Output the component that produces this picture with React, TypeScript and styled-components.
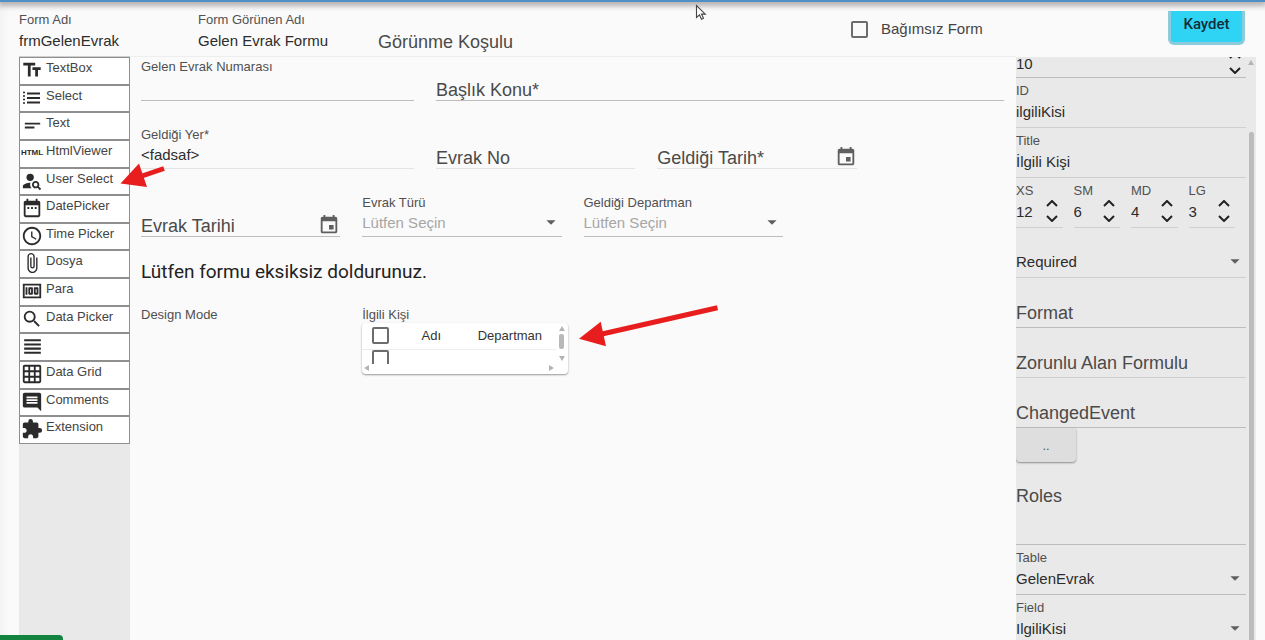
import React from "react";
import styled, { createGlobalStyle, css } from "styled-components";
import {
  MdTextFields,
  MdShortText,
  MdPersonSearch,
  MdDateRange,
  MdAccessTime,
  MdAttachFile,
  MdMoney,
  MdSearch,
  MdViewHeadline,
  MdGridOn,
  MdComment,
  MdExtension,
  MdEvent,
  MdArrowDropDown,
} from "react-icons/md";

const sans = '"Liberation Sans", Arial, sans-serif';
const roboto = 'Roboto, "Liberation Sans", sans-serif';

const GlobalStyle = createGlobalStyle`
  *, *::before, *::after { box-sizing: border-box; }
  body { margin: 0; background: #fafafa; color: #333; font-family: ${sans}; }
  button, input, select { font-family: inherit; color: inherit; margin: 0; }
`;

const Page = styled.div`
  position: relative;
  display: flex;
  flex-direction: column;
  height: 100vh;
  overflow: hidden;
  background: linear-gradient(to right, #f3f3f3, #fafafa 10px);
`;

const TopBar = styled.div`
  position: absolute;
  inset: 0 0 auto 0;
  height: 2px;
  background: #4f8fc4;
  box-shadow: 0 1px 6px 2px rgba(0, 0, 0, 0.4);
`;

const Header = styled.header`
  display: flex;
  align-items: flex-end;
  height: 57px;
  flex: none;
  padding: 0 20px 0 19px;
`;

const HeaderFields = styled.div`
  display: grid;
  grid-template-columns: 179fr 180fr 460fr;
  flex: 819;
`;

const HeaderActions = styled.div`
  display: flex;
  align-items: flex-start;
  justify-content: space-between;
  flex: 407;
  height: 46px;
`;

const CheckLabel = styled.label`
  display: flex;
  align-items: center;
  gap: 13px;
  margin-left: 13px;
  padding-top: 9px;
  font-size: 15px;
  line-height: 18px;
  color: #444;
`;

const CheckBox = styled.input`
  appearance: none;
  flex: none;
  width: 17px;
  height: 17px;
  border: 2px solid #6c6c6c;
  border-radius: 2px;
  background: transparent;
  display: block;
`;

const SaveButton = styled.button`
  width: 77px;
  height: 34px;
  padding: 0 0 6px;
  border: 3px solid #8ccbdc;
  border-top: 0;
  border-radius: 0 0 6px 6px;
  background: #2fd3f3;
  font-family: ${roboto};
  font-size: 15px;
  font-weight: 500;
  color: #12303a;
`;

const Workspace = styled.div`
  display: flex;
  flex: 1;
  min-height: 0;
  padding-left: 19px;
`;

const Sidebar = styled.nav`
  flex: none;
  width: 111px;
  background: #e9e9e9;
`;

const Palette = styled.ul`
  display: grid;
  grid-template-rows: repeat(14, 1fr);
  height: 387px;
  margin: 0;
  padding: 0;
  list-style: none;
`;

const PaletteButton = styled.button`
  display: flex;
  align-items: flex-start;
  width: 100%;
  height: 100%;
  padding: 2px 0 0 1px;
  border: 1px solid #8f8f8f;
  background: #fff;
  font-size: 13px;
  line-height: 16px;
  text-align: left;
  color: #444;
`;

const PaletteIcon = styled.span`
  display: flex;
  align-items: center;
  justify-content: center;
  flex: none;
  width: 22px;
  height: 20px;
  margin-right: 3px;
  color: #2b2b2b;
  svg { display: block; flex: none; }
`;

const HtmlMark = styled.span`
  font-size: 8px;
  font-weight: 700;
`;

const Canvas = styled.main`
  flex: 1;
  min-width: 0;
  border-top: 1px solid #eee;
  margin-top: -1px;
  padding: 0 12px 0 11px;
`;

const FormGrid = styled.form`
  display: grid;
  grid-template-columns: repeat(12, 1fr);
  gap: 24px 22px;
`;

const Cell = styled.div<{ $span: number }>`
  grid-column: span ${(p) => p.$span};
  min-width: 0;
`;

const RowStart = styled(Cell)`
  grid-column: 1 / span ${(p) => p.$span};
`;

const FieldBox = styled.label<{ $roomy?: boolean; $strong?: boolean; $plain?: boolean }>`
  display: flex;
  flex-direction: column;
  justify-content: flex-end;
  height: ${(p) => (p.$roomy ? 50 : 44)}px;
  border-bottom: 1px solid ${(p) => (p.$plain ? "#e4e4e4" : p.$strong ? "#bdbdbd" : "#cfcfcf")};
`;

const Caption = styled.span`
  display: block;
  font-size: 13px;
  line-height: 16px;
  white-space: nowrap;
  color: #505050;
`;

const InputLine = styled.span<{ $roomy?: boolean }>`
  display: flex;
  align-items: center;
  height: ${(p) => (p.$roomy ? 24 : 22)}px;
  margin-bottom: ${(p) => (p.$roomy ? 4 : 3)}px;
`;

const EmptyLine = styled.span<{ $roomy?: boolean }>`
  display: flex;
  align-items: center;
  height: 20px;
  margin-bottom: ${(p) => (p.$roomy ? 4 : 0)}px;
`;

const TextInput = styled.input<{ $big?: boolean }>`
  flex: 1;
  width: 100%;
  min-width: 0;
  height: 100%;
  padding: 0;
  border: 0;
  outline: 0;
  background: transparent;
  font-size: ${(p) => (p.$big ? 18 : 15)}px;
  color: #2c2c2c;
  &::placeholder { color: #4a4a4a; opacity: 1; }
`;

const IconButton = styled.button`
  display: flex;
  padding: 0 0 3px;
  border: 0;
  background: none;
  color: #5f5f5f;
`;

const SelectLine = styled(InputLine)`
  display: grid;
  > * { grid-area: 1 / 1; }
  > svg { justify-self: end; pointer-events: none; color: #5f5f5f; }
`;

const NativeSelect = styled.select<{ $muted?: boolean }>`
  appearance: none;
  width: 100%;
  height: 100%;
  padding: 0;
  border: 0;
  outline: 0;
  background: transparent;
  font-size: 15px;
  color: ${(p) => (p.$muted ? "#a6a6a6" : "#2c2c2c")};
`;

const Notice = styled.p`
  grid-column: 1 / -1;
  margin: 0;
  font-family: ${roboto};
  font-size: 19px;
  line-height: 22px;
  color: #222;
`;

const PickerCard = styled.div`
  display: flex;
  width: calc(100% + 6px);
  height: 51px;
  border-radius: 4px;
  background: #fff;
  box-shadow: 0 1px 2px rgba(0, 0, 0, 0.4);
`;

const PickerBody = styled.div`
  display: flex;
  flex-direction: column;
  flex: 1;
  min-width: 0;
`;

const PickerView = styled.div`
  height: 41px;
  overflow: hidden;
`;

const PickerTable = styled.table`
  width: 100%;
  border-collapse: collapse;
  table-layout: fixed;
  th, td { height: 26px; padding: 0; font-size: 13px; font-weight: 400; color: #333; }
  thead tr { border-bottom: 1px solid #eee; }
  tbody td { height: 20px; vertical-align: top; }
  th:first-child { width: 36px; }
  th:nth-child(2) { width: 66px; }
  input { margin-left: 10px; }
`;

const HorizontalScroll = styled.div`
  display: flex;
  align-items: center;
  justify-content: space-between;
  height: 8px;
  padding: 0 2px;
`;

const VerticalScroll = styled.div`
  display: flex;
  flex-direction: column;
  align-items: center;
  width: 12px;
  height: 41px;
  padding: 3px 0;
`;

const Tip = styled.span<{ $dir: "up" | "down" | "left" | "right" }>`
  width: 0;
  height: 0;
  border: 3px solid transparent;
  ${(p) => p.$dir === "up" && css`border-top: 0; border-bottom: 5px solid #b4b4b4;`}
  ${(p) => p.$dir === "down" && css`border-bottom: 0; border-top: 5px solid #b4b4b4;`}
  ${(p) => p.$dir === "left" && css`border-left: 0; border-right: 5px solid #b4b4b4;`}
  ${(p) => p.$dir === "right" && css`border-right: 0; border-left: 5px solid #b4b4b4;`}
`;

const PickerThumb = styled.span`
  width: 5px;
  height: 15px;
  margin: 3px 0 auto;
  border-radius: 2px;
  background: #b9b9b9;
`;

const Properties = styled.aside`
  display: flex;
  flex: none;
  width: 240px;
  margin-right: 9px;
  background: #e9e9e9;
  overflow: hidden;
`;

const PropertyList = styled.form`
  flex: 1;
  min-width: 0;
`;

const PropertyScroll = styled.div`
  display: flex;
  flex-direction: column;
  align-items: center;
  width: 10px;
  padding-top: 3px;
`;

const PropertyThumb = styled.span`
  flex: 1;
  width: 5px;
  margin-top: 67px;
  border-radius: 2px 2px 0 0;
  background: #bcbcbc;
`;

const TopClip = styled.div`
  display: flex;
  align-items: flex-end;
  height: 21px;
  overflow: hidden;
  > label { flex: 1; }
`;

const Columns = styled.div`
  display: grid;
  grid-template-columns: repeat(4, 1fr);
  gap: 11px;
  padding-right: 11px;
`;

const Steps = styled.span`
  display: flex;
  flex-direction: column;
  gap: 8px;
  width: 22px;
  button { display: flex; justify-content: center; padding: 0; border: 0; background: none; color: #222; }
`;

const EventButton = styled.button`
  display: block;
  width: 60px;
  height: 34px;
  border: 0;
  border-radius: 0 0 4px 4px;
  background: #dedede;
  box-shadow: 0 1px 2px rgba(0, 0, 0, 0.4);
  font-size: 13px;
  color: #555;
`;

const RolesBox = styled.label`
  display: flex;
  align-items: center;
  height: 83px;
  padding-bottom: 14px;
  border-bottom: 1px solid #bdbdbd;
`;

const Overlay = styled.svg<{ $x: number; $y: number }>`
  position: absolute;
  left: ${(p) => p.$x}px;
  top: ${(p) => p.$y}px;
  pointer-events: none;
`;

const StatusTab = styled.div`
  position: absolute;
  left: 0;
  bottom: 0;
  width: 63px;
  height: 5px;
  border-radius: 0 4px 0 0;
  background: #12843f;
`;

function DottedList() {
  return (
    <svg width="20" height="14" viewBox="0 0 20 14" fill="none" stroke="currentColor">
      <path d="M5 2.500h13M5 7h13M5 11.500h13" strokeWidth="2" />
      <path d="M1 1.500h2M1 5h2M1 8.500h2M1 12h2" strokeWidth="1.500" />
    </svg>
  );
}

const paletteItems: { name: string; icon: React.ReactNode }[] = [
  { name: "TextBox", icon: <MdTextFields size={22} /> },
  { name: "Select", icon: <DottedList /> },
  { name: "Text", icon: <MdShortText size={23} /> },
  { name: "HtmlViewer", icon: <HtmlMark>HTML</HtmlMark> },
  { name: "User Select", icon: <MdPersonSearch size={22} /> },
  { name: "DatePicker", icon: <MdDateRange size={22} /> },
  { name: "Time Picker", icon: <MdAccessTime size={22} /> },
  { name: "Dosya", icon: <MdAttachFile size={22} /> },
  { name: "Para", icon: <MdMoney size={22} /> },
  { name: "Data Picker", icon: <MdSearch size={22} /> },
  { name: "", icon: <MdViewHeadline size={25} /> },
  { name: "Data Grid", icon: <MdGridOn size={22} /> },
  { name: "Comments", icon: <MdComment size={22} /> },
  { name: "Extension", icon: <MdExtension size={22} /> },
];

type FieldProps = { caption: string; value?: string; roomy?: boolean; strong?: boolean; plain?: boolean };

function Field({ caption, value = "", roomy, strong, plain }: FieldProps) {
  return (
    <FieldBox $roomy={roomy} $strong={strong} $plain={plain}>
      <Caption>{caption}</Caption>
      <InputLine $roomy={roomy}>
        <TextInput defaultValue={value} />
      </InputLine>
    </FieldBox>
  );
}

function EmptyField({ caption, roomy, strong, plain, date }: FieldProps & { date?: boolean }) {
  return (
    <FieldBox $roomy={roomy} $strong={strong} $plain={plain}>
      <EmptyLine $roomy={roomy}>
        <TextInput $big placeholder={caption} aria-label={caption} />
        {date && (
          <IconButton type="button" aria-label="Takvim">
            <MdEvent size={22} />
          </IconButton>
        )}
      </EmptyLine>
    </FieldBox>
  );
}

function SelectField({ caption, option, roomy, strong, muted, label }: {
  caption?: string; option: string; roomy?: boolean; strong?: boolean; muted?: boolean; label?: string;
}) {
  return (
    <FieldBox $roomy={roomy} $strong={strong}>
      {caption && <Caption>{caption}</Caption>}
      <SelectLine $roomy={roomy}>
        <NativeSelect $muted={muted} aria-label={label}>
          <option>{option}</option>
        </NativeSelect>
        <MdArrowDropDown size={22} />
      </SelectLine>
    </FieldBox>
  );
}

function Chevron({ down }: { down?: boolean }) {
  return (
    <svg width="12" height="7" viewBox="0 0 12 7" fill="none" stroke="currentColor" strokeWidth="2">
      <path d={down ? "M1 1l5 5 5-5" : "M1 6l5-5 5 5"} />
    </svg>
  );
}

function NumberField({ caption, value, label }: { caption?: string; value: string; label?: string }) {
  return (
    <FieldBox $roomy $strong={!caption}>
      {caption && <Caption>{caption}</Caption>}
      <InputLine $roomy={!!caption}>
        <TextInput defaultValue={value} inputMode="numeric" aria-label={label} />
        <Steps>
          <button type="button" aria-label="Artır"><Chevron /></button>
          <button type="button" aria-label="Azalt"><Chevron down /></button>
        </Steps>
      </InputLine>
    </FieldBox>
  );
}

export default function App() {
  return (
    <Page>
      <GlobalStyle />
      <Header>
        <HeaderFields>
          <Field roomy caption="Form Adı" value="frmGelenEvrak" />
          <Field roomy caption="Form Görünen Adı" value="Gelen Evrak Formu" />
          <EmptyField roomy caption="Görünme Koşulu" />
        </HeaderFields>
        <HeaderActions>
          <CheckLabel>
            <CheckBox type="checkbox" />
            Bağımsız Form
          </CheckLabel>
          <SaveButton type="button">Kaydet</SaveButton>
        </HeaderActions>
      </Header>
      <Workspace>
        <Sidebar>
          <Palette>
            {paletteItems.map((item, i) => (
              <li key={i}>
                <PaletteButton type="button">
                  <PaletteIcon>{item.icon}</PaletteIcon>
                  {item.name}
                </PaletteButton>
              </li>
            ))}
          </Palette>
        </Sidebar>
        <Canvas>
          <FormGrid>
            <Cell $span={4}><Field strong caption="Gelen Evrak Numarası" /></Cell>
            <Cell $span={8}><EmptyField strong caption="Başlık Konu*" /></Cell>
            <Cell $span={4}><Field plain caption="Geldiği Yer*" value="<fadsaf>" /></Cell>
            <Cell $span={3}><EmptyField plain caption="Evrak No" /></Cell>
            <Cell $span={3}><EmptyField plain date caption="Geldiği Tarih*" /></Cell>
            <RowStart $span={3}><EmptyField strong date caption="Evrak Tarihi" /></RowStart>
            <Cell $span={3}><SelectField strong muted caption="Evrak Türü" option="Lütfen Seçin" /></Cell>
            <Cell $span={3}><SelectField strong muted caption="Geldiği Departman" option="Lütfen Seçin" /></Cell>
            <Notice>Lütfen formu eksiksiz doldurunuz.</Notice>
            <RowStart $span={3}><Caption>Design Mode</Caption></RowStart>
            <Cell $span={3}>
              <Caption>İlgili Kişi</Caption>
              <PickerCard>
                <PickerBody>
                  <PickerView>
                    <PickerTable>
                      <thead>
                        <tr>
                          <th><CheckBox type="checkbox" aria-label="Tümünü seç" /></th>
                          <th>Adı</th>
                          <th>Departman</th>
                        </tr>
                      </thead>
                      <tbody>
                        <tr>
                          <td><CheckBox type="checkbox" aria-label="Satırı seç" /></td>
                          <td />
                          <td />
                        </tr>
                      </tbody>
                    </PickerTable>
                  </PickerView>
                  <HorizontalScroll><Tip $dir="left" /><Tip $dir="right" /></HorizontalScroll>
                </PickerBody>
                <VerticalScroll><Tip $dir="up" /><PickerThumb /><Tip $dir="down" /></VerticalScroll>
              </PickerCard>
            </Cell>
          </FormGrid>
        </Canvas>
        <Properties>
          <PropertyList>
            <TopClip><NumberField value="10" label="Order" /></TopClip>
            <Field roomy caption="ID" value="ilgiliKisi" />
            <Field roomy caption="Title" value="İlgili Kişi" />
            <Columns>
              <NumberField caption="XS" value="12" />
              <NumberField caption="SM" value="6" />
              <NumberField caption="MD" value="4" />
              <NumberField caption="LG" value="3" />
            </Columns>
            <SelectField roomy option="Required" label="Required" />
            <EmptyField roomy strong caption="Format" />
            <EmptyField roomy caption="Zorunlu Alan Formulu" />
            <EmptyField roomy strong caption="ChangedEvent" />
            <EventButton type="button">..</EventButton>
            <RolesBox><TextInput $big placeholder="Roles" aria-label="Roles" /></RolesBox>
            <SelectField roomy strong caption="Table" option="GelenEvrak" />
            <SelectField roomy strong caption="Field" option="IlgiliKisi" />
          </PropertyList>
          <PropertyScroll><Tip $dir="up" /><PropertyThumb /></PropertyScroll>
        </Properties>
      </Workspace>
      <TopBar />
      <Overlay $x={695} $y={4} width="12" height="18" viewBox="0 0 12 18">
        <path d="M1.5 1.5v12l3-2.6 2 4.4 2-1-2-4.2h3.800z" fill="#fff" stroke="#444" strokeWidth="1.100" />
      </Overlay>
      <Overlay $x={120} $y={160} width="48" height="30" viewBox="0 0 48 30" fill="#e81e1e">
        <path d="M0.500 23.500L19 3.500l8 23.500z" />
        <path d="M22 16L44 8.500" stroke="#e81e1e" strokeWidth="5" />
      </Overlay>
      <Overlay $x={578} $y={302} width="142" height="46" viewBox="0 0 142 46" fill="#e81e1e">
        <path d="M1 36.700L22.700 19.700l5.300 24.600z" />
        <path d="M24 32L139.500 5.700" stroke="#e81e1e" strokeWidth="5" />
      </Overlay>
      <StatusTab />
    </Page>
  );
}
